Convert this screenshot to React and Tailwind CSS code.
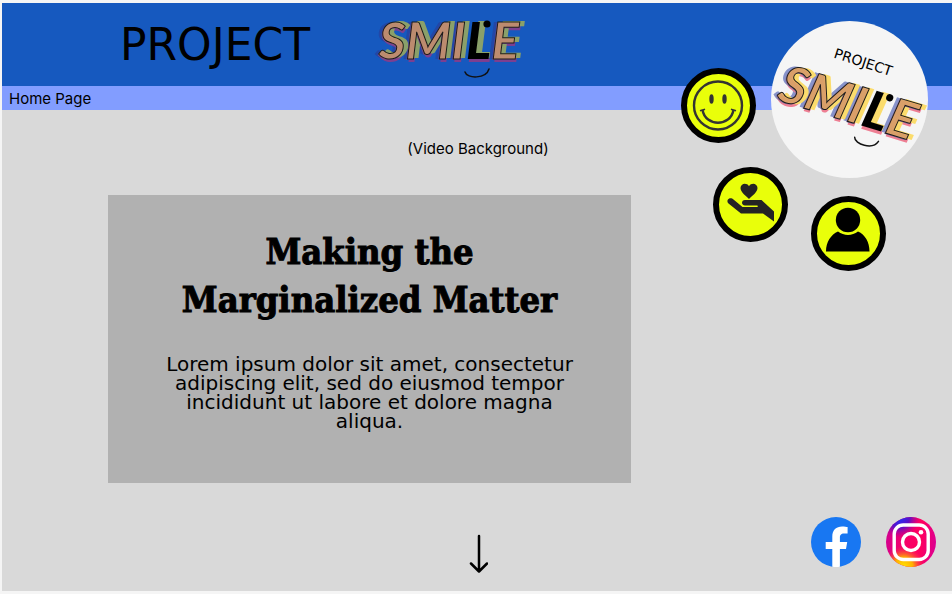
import React from "react";

function SmileWord({ muted = false }) {
  const fill = muted
    ? "text-[#c8966ad9] [text-shadow:-1px_1px_0_#7b4a8c,5px_-1px_0_#8aa06a,1px_3px_0_#7d3f90,-4px_0_0_#2347a6]"
    : "text-[#e6a85fd9] [text-shadow:-1px_1px_0_#8a6f9f,5px_-1px_0_#fbdc6c,1px_3px_0_#ee7f93,-4px_0_0_#8792c9]";
  const solid = muted
    ? "text-black [text-shadow:6px_-1px_0_#8aa06a,1px_3px_0_#7d3f90]"
    : "text-black [text-shadow:6px_-1px_0_#fbdc6c,1px_3px_0_#ee7f93]";
  return (
    <span className="relative block w-[150px] text-center font-['Lato',sans-serif] text-[52px] leading-[60px] font-black italic whitespace-nowrap">
      <span className={`font-bold [-webkit-text-stroke:1px_#1a1a1a] ${fill}`}>SMI</span>
      <span className={solid}>L</span>
      <span className={`font-bold [-webkit-text-stroke:1px_#1a1a1a] ${fill}`}>E</span>
      <svg viewBox="0 0 150 76" className="absolute top-0 left-0 h-[76px] w-[150px]" aria-hidden="true">
        <circle cx="113" cy="15" r="3.600" fill="#000" />
        <path d="M91 63c2 7 21 7 24-3" fill="none" stroke="#111" strokeWidth="1.500" strokeLinecap="round" />
      </svg>
    </span>
  );
}

function RoundLink({ label, className, children }) {
  return (
    <a
      href="#"
      aria-label={label}
      className={`absolute flex size-[75px] items-center justify-center rounded-full border-6 border-black bg-[#e9ff0a] ${className}`}
    >
      {children}
    </a>
  );
}

function FloatingMenu() {
  return (
    <nav aria-label="Main" className="absolute top-[21px] right-6 h-[250px] w-[247px]">
      <a href="#" className="absolute top-0 right-0 block size-[157px] rounded-full bg-[#f5f5f5]">
        <span className="absolute top-[33px] left-[62px] rotate-18 font-['DejaVu_Sans',sans-serif] text-[14px] leading-4">
          PROJECT
        </span>
        <span className="absolute top-[50px] left-[3px] rotate-17">
          <SmileWord />
        </span>
      </a>
      <RoundLink label="Happiness" className="top-[47px] left-0">
        <svg viewBox="0 0 63 63" className="size-full" fill="none" stroke="#333">
          <circle cx="31" cy="31.500" r="24" strokeWidth="2.400" />
          <ellipse cx="24.500" cy="25" rx="2.200" ry="4.700" fill="#333" stroke="none" />
          <ellipse cx="37.500" cy="25" rx="2.200" ry="4.700" fill="#333" stroke="none" />
          <path d="M15.500 36c3 17 28 17 31 0" strokeWidth="2.400" />
          <path d="M13.700 36.500l3.600-1M44.700 35.500l3.600 1" strokeWidth="1.800" strokeLinecap="round" />
        </svg>
      </RoundLink>
      <RoundLink label="Donate" className="top-[146px] left-8">
        <svg viewBox="0 0 63 63" className="size-full" fill="#242424">
          <path d="M30 26C27 23 21.500 19 21.500 15c0-4.500 6-6 8.500-1.800C32.500 9 38.500 10.500 38.500 15c0 4-5.500 8-8.500 11z" />
          <path d="M9 26.500c1.500-2 4-1.600 5.500 0l9 7.500h14.500c1.200 0 1.200-1.600 0-1.600H26c-4 0-4-5.400 0-5.400h16.500L55 38.500v10l-11-8H22L9.500 30.500c-1.200-1-1.500-2.700-.5-4z" />
        </svg>
      </RoundLink>
      <RoundLink label="Profile" className="top-[175px] left-[130px]">
        <svg viewBox="0 0 63 63" className="size-full" fill="#000">
          <circle cx="31" cy="18" r="12.200" />
          <path d="M9 49.500C9 40 14 32.500 21 29.500c6 4.500 14 4.500 20 0c7 3 11.500 10.500 11.500 20z" />
        </svg>
      </RoundLink>
    </nav>
  );
}

function FacebookIcon() {
  return (
    <svg viewBox="0 0 50 50" className="size-[50px]" aria-hidden="true">
      <circle cx="25" cy="25" r="25" fill="#1877f2" />
      <path
        d="M21.300 49.800V32h-6.600v-7h6.600v-5.500c0-6.500 3.900-10 9.800-10 2.200 0 4.800.4 5.500.5v6.400h-3.500c-3.200 0-4.200 2-4.200 4V25h7.300l-1.200 7h-6.100v17.800a25 25 0 0 1-7.600 0z"
        fill="#fff"
      />
    </svg>
  );
}

function InstagramIcon() {
  return (
    <svg viewBox="0 0 50 50" className="size-[50px]" aria-hidden="true">
      <defs>
        <linearGradient id="ig-base" x1="0" y1="0.400" x2="1" y2="0.500">
          <stop offset="0" stopColor="#d4008f" />
          <stop offset="0.350" stopColor="#f5006a" />
          <stop offset="0.700" stopColor="#ff005f" />
          <stop offset="1" stopColor="#dc0092" />
        </linearGradient>
        <radialGradient id="ig-blue" cx="0.260" cy="0" r="0.420">
          <stop offset="0" stopColor="#1a35ff" />
          <stop offset="0.500" stopColor="#5a10c8" />
          <stop offset="1" stopColor="#b000a0" stopOpacity="0" />
        </radialGradient>
        <radialGradient id="ig-warm" cx="0.350" cy="1" r="0.420">
          <stop offset="0" stopColor="#ffe600" />
          <stop offset="0.450" stopColor="#ffb000" />
          <stop offset="1" stopColor="#ff3040" stopOpacity="0" />
        </radialGradient>
      </defs>
      <circle cx="25" cy="25" r="25" fill="url(#ig-base)" />
      <circle cx="25" cy="25" r="25" fill="url(#ig-blue)" />
      <circle cx="25" cy="25" r="25" fill="url(#ig-warm)" />
      <g fill="none" stroke="#fff" strokeWidth="3.400">
        <rect x="8.200" y="8" width="34" height="34.500" rx="9" />
        <circle cx="25" cy="25" r="8.500" />
      </g>
      <circle cx="35" cy="15.300" r="2.300" fill="#fff" />
    </svg>
  );
}

export default function App() {
  return (
    <div className="relative flex min-h-screen flex-col bg-[#f5f5f5] pt-[3px] pb-[3px] pl-[2px] font-['Inter',sans-serif] text-[15px] text-black">
      <header className="flex h-[83px] items-center gap-6 bg-[#1659bf] pl-[118px]">
        <span className="w-[230px] font-['DejaVu_Sans',sans-serif] text-[44px] leading-none">PROJECT</span>
        <span className="pb-3">
          <SmileWord muted />
        </span>
      </header>
      <div className="flex h-6 items-end bg-[#829dff] px-[7px]">
        <a href="#">Home Page</a>
      </div>
      <main className="flex grow flex-col bg-[#d9d9d9] pt-7">
        <p className="pl-[2px] text-center leading-[22px]">(Video Background)</p>
        <section className="mt-[35px] ml-[106px] min-h-[288px] max-w-[523px] bg-[#b1b1b1] px-12 pt-8 text-center">
          <h1 className="font-['DejaVu_Serif_Condensed','DejaVu_Serif',serif] text-[36px] leading-12 font-bold [-webkit-text-stroke:1px_black]">
            Making the
            <br />
            Marginalized Matter
          </h1>
          <p className="mt-8 font-['DejaVu_Sans',sans-serif] text-[20px] leading-[19px]">
            Lorem ipsum dolor sit amet, consectetur adipiscing elit, sed do eiusmod tempor
            incididunt ut labore et dolore magna aliqua.
          </p>
        </section>
        <footer className="mt-auto grid grid-cols-3 items-end pb-[17px]">
          <a href="#" aria-label="Scroll down" className="col-start-2 justify-self-center">
            <svg
              viewBox="0 0 22 40"
              className="h-10 w-[22px]"
              fill="none"
              stroke="#000"
              strokeWidth="2.500"
              strokeLinecap="round"
              strokeLinejoin="round"
            >
              <path d="M13 2v35M5 29.500l8 8l8-8" />
            </svg>
          </a>
          <div className="flex justify-end gap-[25px] pr-4 pb-[7px]">
            <a href="#" aria-label="Facebook"><FacebookIcon /></a>
            <a href="#" aria-label="Instagram"><InstagramIcon /></a>
          </div>
        </footer>
      </main>
      <FloatingMenu />
    </div>
  );
}
